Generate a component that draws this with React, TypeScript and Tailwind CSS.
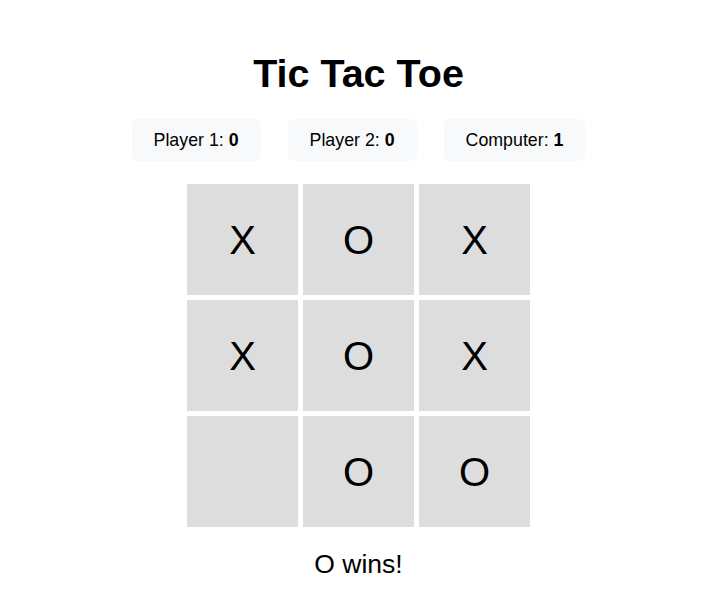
import React from 'react';

const board: string[] = ['X', 'O', 'X', 'X', 'O', 'X', '', 'O', 'O'];

const scores = [
  { label: 'Player 1', value: 0 },
  { label: 'Player 2', value: 0 },
  { label: 'Computer', value: 1 },
];

const App: React.FC = () => {
  return (
    <div
      className="min-h-[610px] bg-white text-black flex flex-col items-center pt-[51px] pr-[2px]"
      style={{ fontFamily: '"Liberation Sans", Arial, sans-serif' }}
    >
      <h1 className="text-[39.5px] leading-[44px] font-bold">Tic Tac Toe</h1>

      <div className="flex justify-center gap-[27px] mt-[24px]">
        {scores.map((s) => (
          <div
            key={s.label}
            className="bg-[#f8f9fa] rounded-md px-[22px] py-[11px] text-[17.8px] leading-[20px]"
          >
            {s.label}: <span className="font-bold">{s.value}</span>
          </div>
        ))}
      </div>

      <div className="grid grid-cols-[repeat(3,111px)] grid-rows-[repeat(3,111px)] gap-[5px] mt-[23px]">
        {board.map((cell, i) => (
          <div
            key={i}
            className="bg-[#dddddd] flex items-center justify-center text-[40px] leading-[46px]"
          >
            {cell}
          </div>
        ))}
      </div>

      <div className="mt-[22px] text-[26.5px] leading-[30px]">O wins!</div>
    </div>
  );
};

export default App;
